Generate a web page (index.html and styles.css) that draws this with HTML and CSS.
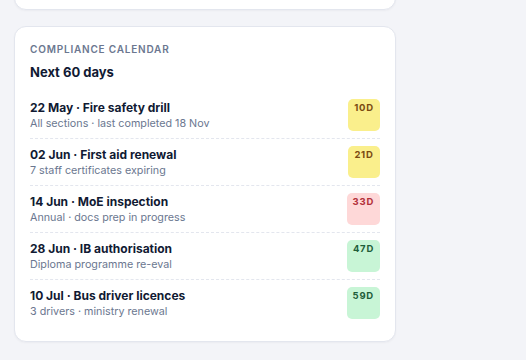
FILE: index.html
```html
<!DOCTYPE html>
<html lang="en">
<head>
    <meta charset="UTF-8">
    <title>Compliance calendar</title>
    <link rel="stylesheet" href="styles.css">
</head>
<body>
    <div class="card card-prev"></div>

    <div class="card">
        <div class="label">Compliance calendar</div>
        <h2>Next 60 days</h2>

        <ul class="events">
            <li class="event">
                <div class="info">
                    <div class="title">22 May · Fire safety drill</div>
                    <div class="sub">All sections · last completed 18 Nov</div>
                </div>
                <span class="badge soon">10D</span>
            </li>
            <li class="event">
                <div class="info">
                    <div class="title">02 Jun · First aid renewal</div>
                    <div class="sub">7 staff certificates expiring</div>
                </div>
                <span class="badge soon">21D</span>
            </li>
            <li class="event">
                <div class="info">
                    <div class="title">14 Jun · MoE inspection</div>
                    <div class="sub">Annual · docs prep in progress</div>
                </div>
                <span class="badge risk">33D</span>
            </li>
            <li class="event">
                <div class="info">
                    <div class="title">28 Jun · IB authorisation</div>
                    <div class="sub">Diploma programme re-eval</div>
                </div>
                <span class="badge ok">47D</span>
            </li>
            <li class="event">
                <div class="info">
                    <div class="title">10 Jul · Bus driver licences</div>
                    <div class="sub">3 drivers · ministry renewal</div>
                </div>
                <span class="badge ok">59D</span>
            </li>
        </ul>
    </div>
</body>
</html>
```

FILE: styles.css
```css
body {
    font-family: Inter, "Noto Sans", sans-serif;
    background-color: #f3f4f8;
    margin: 0;
    padding: 0 130px 0 14px;
    color: #111a33;
}

.card {
    background-color: #fff;
    border: 1px solid #e3e6ee;
    border-radius: 12px;
    box-shadow: 0 1px 2px rgba(20, 30, 60, 0.04);
    padding: 15px 15px 15px 15px;
    margin-bottom: 16px;
}

.card-prev {
    margin-top: -30px;
    padding: 0;
    height: 38px;
}

.label {
    font-size: 10px;
    font-weight: 600;
    letter-spacing: 0.08em;
    text-transform: uppercase;
    color: #6b7790;
    line-height: 14px;
}

h2 {
    font-size: 13px;
    font-weight: 700;
    margin: 7px 0 11px;
    line-height: 18px;
}

.events {
    list-style: none;
    margin: 0;
    padding: 0;
}

.event {
    display: flex;
    justify-content: space-between;
    gap: 12px;
    padding: 7px 0;
    border-bottom: 1px dashed #e3e6ee;
}

.event:last-child {
    border-bottom: none;
}

.title {
    font-size: 12px;
    font-weight: 700;
    line-height: 17px;
}

.sub {
    font-size: 10.75px;
    color: #6b7790;
    line-height: 15px;
}

.badge {
    font-size: 9.5px;
    font-weight: 700;
    letter-spacing: 0.08em;
    padding: 3px 6px;
    border-radius: 5px;
    min-width: 20px;
    text-align: center;
}

.soon {
    background-color: #faef8c;
    color: #7a4a12;
}

.risk {
    background-color: #fed8d8;
    color: #b3303a;
}

.ok {
    background-color: #c8f5d6;
    color: #1f5e3a;
}
```
